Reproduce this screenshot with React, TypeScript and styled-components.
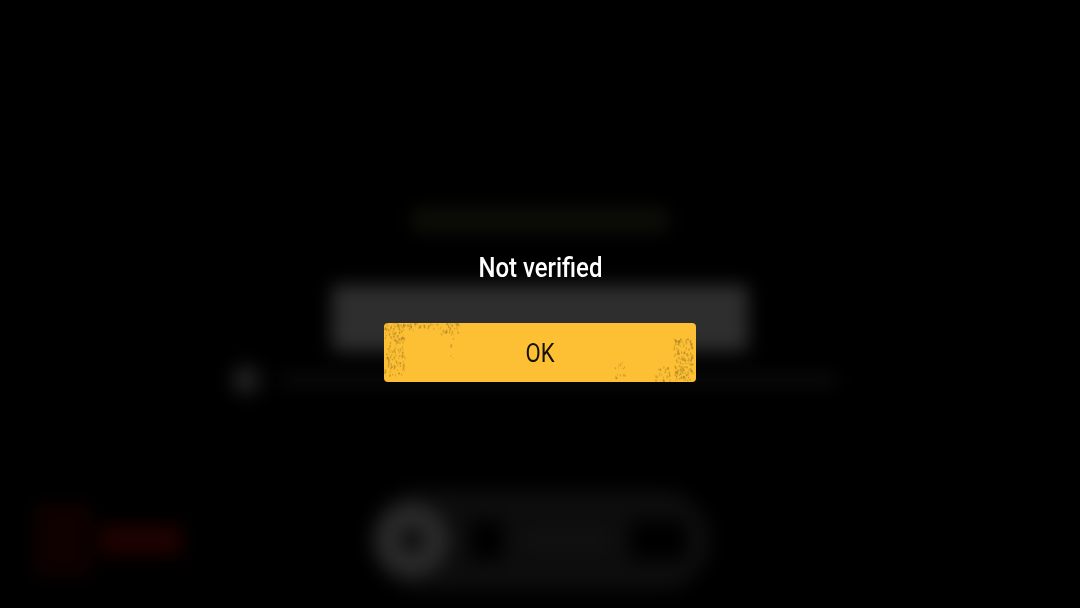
import React from "react";
import styled, { createGlobalStyle } from "styled-components";

const GlobalStyle = createGlobalStyle`
  html, body {
    margin: 0;
    height: 100%;
    background: #000;
  }
  #root {
    height: 100%;
  }
`;

const Screen = styled.div`
  position: relative;
  width: 1080px;
  height: 608px;
  overflow: hidden;
  background: #000;
  font-family: Roboto, "Liberation Sans", sans-serif;
`;

// the page behind the dialog, out of focus
const Backdrop = styled.div`
  position: absolute;
  inset: 0;
  display: flex;
  flex-direction: column;
  align-items: center;
  padding-top: 209px;
  box-sizing: border-box;
  filter: blur(9px);
`;

const HeadingBar = styled.div`
  width: 256px;
  height: 22px;
  background: #0e0e08;
`;

const InputBar = styled.div`
  width: 416px;
  height: 66px;
  margin-top: 54px;
  background: #2e2e2e;
  border-radius: 4px;
`;

const ConsentRow = styled.div`
  display: flex;
  align-items: center;
  gap: 20px;
  width: 618px;
  height: 30px;
  margin-top: 14px;
  padding-right: 12px;
  box-sizing: border-box;
`;

const ConsentDot = styled.div`
  width: 30px;
  height: 30px;
  border-radius: 50%;
  background: #1f1f1f;
`;

const ConsentText = styled.div`
  flex: 1;
  height: 14px;
  background: #0a0a0a;
`;

const BottomRow = styled.div`
  display: grid;
  grid-template-columns: 1fr 340px 1fr;
  align-items: center;
  width: 100%;
  margin-top: 95px;
`;

const ExitButton = styled.div`
  display: flex;
  align-items: center;
  justify-self: start;
  gap: 8px;
  margin-left: 34px;
  height: 78px;
`;

const ExitIcon = styled.div`
  width: 58px;
  height: 74px;
  background: #0e0100;
  border-radius: 3px;
`;

const ExitLabel = styled.div`
  width: 82px;
  height: 30px;
  background: #1e0200;
`;

const Pill = styled.div`
  display: flex;
  align-items: center;
  gap: 22px;
  height: 100px;
  padding: 0 24px 0 5px;
  box-sizing: border-box;
  border-radius: 50px;
  background: #0d0d0d;
`;

const PillKnob = styled.div`
  display: flex;
  align-items: center;
  justify-content: center;
  width: 74px;
  height: 74px;
  border-radius: 50%;
  background: #292929;
`;

const PillKnobCore = styled.div`
  width: 22px;
  height: 22px;
  border-radius: 50%;
  background: #0a0a0a;
`;

const PillGap = styled.div`
  width: 32px;
  height: 40px;
  background: #000;
`;

const PillText = styled.div`
  flex: 1;
  height: 18px;
  background: #111;
`;

const PillEnd = styled.div`
  width: 56px;
  height: 40px;
  background: #000;
`;

// soft edge on everything in the dialog, the capture is not crisp
const Dialog = styled.div`
  position: absolute;
  inset: 0;
  display: flex;
  flex-direction: column;
  align-items: center;
  padding-top: 251px;
  box-sizing: border-box;
  filter: blur(0.35px);
`;

const Message = styled.div`
  height: 34px;
  line-height: 34px;
  color: #fff;
  font-size: 28px;
  font-weight: 500;
  transform: scaleX(0.855);
`;

const OkButton = styled.button`
  position: relative;
  width: 312px;
  height: 59px;
  margin-top: 38px;
  padding: 0;
  overflow: hidden;
  border: 0;
  border-radius: 4px;
  background: #fdbf33;
  color: #14110a;
  font-family: inherit;
  font-size: 26px;
  font-weight: 400;
`;

const OkLabel = styled.span`
  position: relative;
  display: inline-block;
  transform: scaleX(0.85);
`;

const Grunge = styled.svg`
  position: absolute;
  inset: 0;
  width: 100%;
  height: 100%;
`;

type Patch = { x: number; y: number; w: number; h: number; count: number };

const patches: Patch[] = [
  { x: 1, y: 1, w: 20, h: 52, count: 150 },
  { x: 1, y: 0, w: 56, h: 8, count: 60 },
  { x: 56, y: 0, w: 20, h: 12, count: 30 },
  { x: 66, y: 10, w: 4, h: 30, count: 6 },
  { x: 290, y: 16, w: 19, h: 42, count: 150 },
  { x: 231, y: 40, w: 10, h: 19, count: 16 },
  { x: 272, y: 44, w: 14, h: 15, count: 24 },
];

// fixed seed so the scuffs land in the same place on every render
const makeSpecks = () => {
  let seed = 41;
  const next = () => {
    seed = (seed * 16807) % 2147483647;
    return seed / 2147483647;
  };
  const specks: { x: number; y: number; rx: number; ry: number; o: number }[] = [];
  patches.forEach((p) => {
    for (let i = 0; i < p.count; i++) {
      const rx = 0.4 + next() * 0.6;
      specks.push({
        x: p.x + next() * p.w,
        y: p.y + next() * p.h,
        rx,
        ry: rx * (1 + next() * 1.2),
        o: 0.25 + next() * 0.45,
      });
    }
  });
  return specks;
};

const specks = makeSpecks();

const App: React.FC = () => {
  return (
    <Screen>
      <GlobalStyle />
      <Backdrop>
        <HeadingBar />
        <InputBar />
        <ConsentRow>
          <ConsentDot />
          <ConsentText />
        </ConsentRow>
        <BottomRow>
          <ExitButton>
            <ExitIcon />
            <ExitLabel />
          </ExitButton>
          <Pill>
            <PillKnob>
              <PillKnobCore />
            </PillKnob>
            <PillGap />
            <PillText />
            <PillEnd />
          </Pill>
        </BottomRow>
      </Backdrop>
      <Dialog>
        <Message>Not verified</Message>
        <OkButton>
          <Grunge viewBox="0 0 312 59">
            {specks.map((s, i) => (
              <ellipse key={i} cx={s.x} cy={s.y} rx={s.rx} ry={s.ry} fill="#a8842a" opacity={s.o} />
            ))}
          </Grunge>
          <OkLabel>OK</OkLabel>
        </OkButton>
      </Dialog>
    </Screen>
  );
};

export default App;
